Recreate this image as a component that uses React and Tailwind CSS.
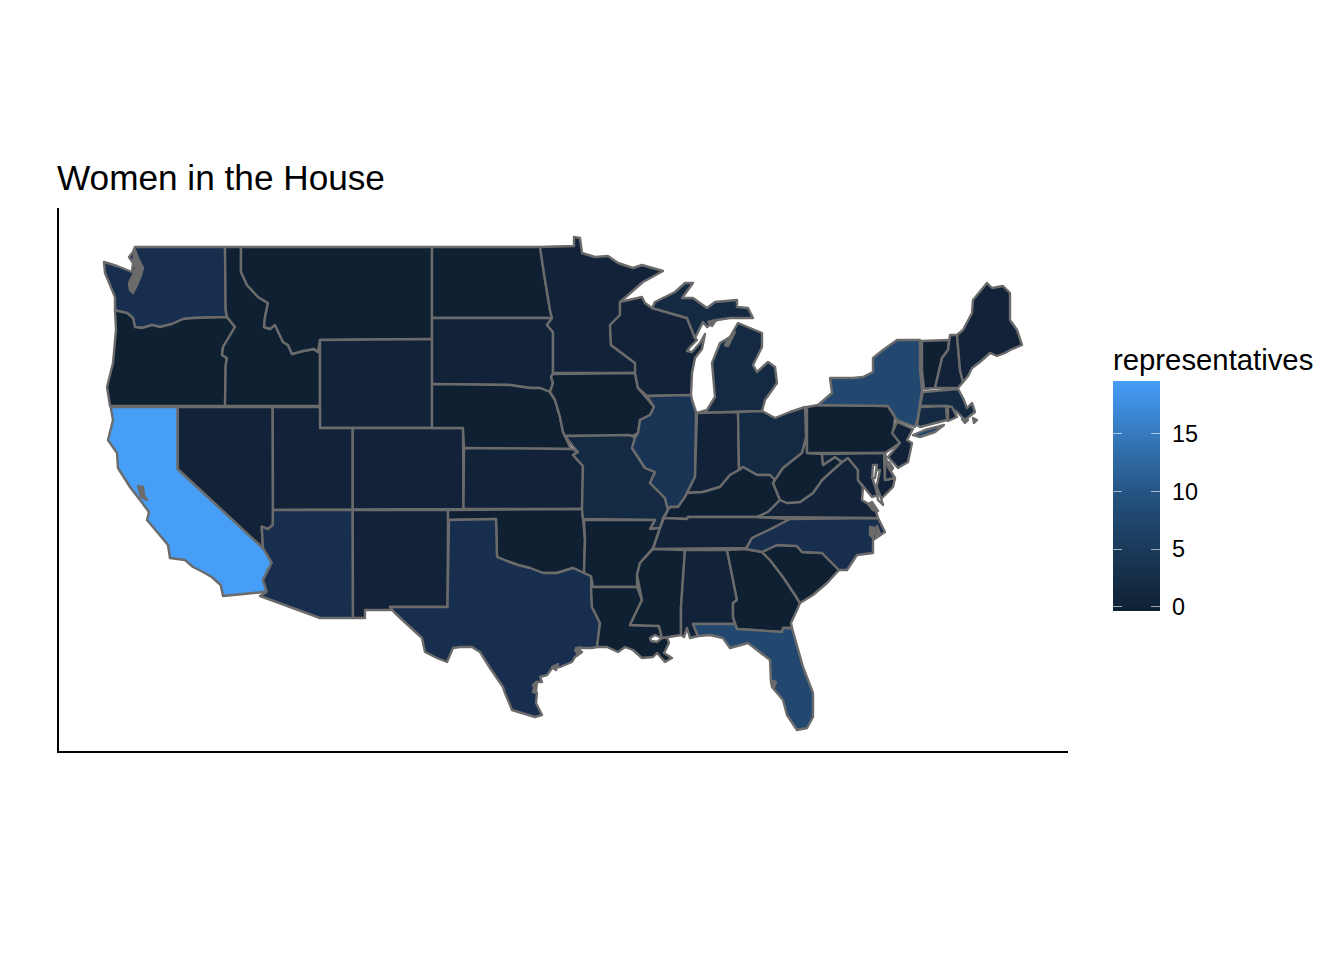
import React from "react";

const c0 = "#0f2033";
const c1 = "#122339";
const c2 = "#142a42";
const c3 = "#182e4f";
const c4 = "#1a3455";
const c5 = "#224870";
const ca = "#469ef7";

// state outlines, in page pixels
const states = [
  ["WA", c3, "135,247 225,247 225.7,310 227,317 193,318 183,319 172,324 160,327 152,325 142,328 135,327 133,318 127,313 118,311 115,310 115,297 110,285 105,273 104,262 117,266 132,272 133,263 129,257 133,252"],
  ["OR", c0, "118,311 127,313 133,318 135,327 142,328 152,325 160,327 172,324 183,319 193,318 227,317 235,327 223,347 222,355 227,358 225.7,365 225,406 110,406 107,387 113,363 116,330 115,310"],
  ["ID", c0, "225,247 241,247 241,272 247,285 258,297 268,303 265,317 264,327 270,329 275,325 283,342 288,345 292,354 303,351 314,349 318,352 320,340 320,406 225,406 225.7,365 227,358 222,355 223,347 235,327 227,317 225.7,310"],
  ["MT", c0, "241,247 432,247 432,339 320,340 318,352 314,349 303,351 292,354 288,345 283,342 275,325 270,329 264,327 265,317 268,303 258,297 247,285 241,272"],
  ["WY", c1, "320,340 432,339 432,428 320,428"],
  ["CA", ca, "110.7,407 177.7,407 177.7,469 263,548 271.7,562.7 263,580 266.7,591.7 223,596 220.7,585 211.7,577 203,572 193,567 185,560 170,558 168,545 158,533 147,520 149,512 140,500 130,487 118,468 117,453 108,440 113,420"],
  ["NV", c1, "177.7,407 272.7,407 273,525 268,529 261.7,526.7 263,548 177.7,469"],
  ["UT", c1, "272.7,407 320,407 320,428 352.7,428 352.7,509.5 273,510"],
  ["CO", c1, "352.7,428 463,428 463.5,509 352.7,509.5"],
  ["AZ", c3, "273,510 352.7,510 353,618 320,618 260,596 266.7,591.7 263,580 271.7,562.7 263,548 261.7,526.7 268,529 272.7,525"],
  ["NM", c1, "352.7,510 448,510 448,520 447.5,606.7 390,607 392,610 365,610 365,618 353,618"],
  ["ND", c0, "432,247 540,247 545,280 550,310 552,318 432,318"],
  ["SD", c1, "432,318 552,318 547,325 553,332 553,373 551,377 553,383 550,392 540,388 530,388 510,385 432,384"],
  ["NE", c0, "432,384 510,385 530,388 540,388 550,392 555,400 560,417 563,432 570,447 572,449 464,448 463,428 432,428"],
  ["KS", c1, "464,448 572,449 578,452 573,455 583,466 582,509 463.5,509"],
  ["OK", c0, "448,510 582,509 585,540 584,573 573,568 557,573 543,573 530,568 518,565 507,561 497,557 496,519 448,520"],
  ["TX", c3, "449,520 496,519 497,557 507,561 518,565 530,568 543,573 557,573 573,568 584,573 591,576 592,607 600,623 597,647 592,648 583,648 576,648 582,652 575,657 572,662 560,667 553,667 547,675 540,677 542,682 536,682 533,692 537,693 536,703 542,715 535,717 512,710 505,693 503,687 490,668 480,652 472,647 460,647 453,648 447,662 437,658 425,652 422,638 410,627 395,613 390,607 447.5,607"],
  ["MN", c1, "540,247 574,246 574,237 580,238 582,253 595,257 608,256 618,263 633,268 642,265 663,271 643,282 620,302 620,315 610,325 611,345 635,363 637,373 553,373 553,332 547,325 552,318 550,310 545,280"],
  ["IA", c0, "553,374 635,373 638,388 654,407 650,415 640,420 638,433 632,436 565,436 563,432 560,417 555,400 550,392 553,383 551,377"],
  ["MO", c2, "565,436 630,435 635,438 632,448 645,468 655,472 650,483 665,498 668,510 663,518 660,528 650,529 655,520 583,519 582,509 583,466 573,455 578,452 572,445"],
  ["AR", c0, "584,520 655,520 650,529 660,528 653,548 640,563 637,575 637,587 593,587 591,576 584,573 585,540"],
  ["LA", c0, "591,587 637,587 642,600 630,625 659,626 662,638 667,637 669,643 664,653 672,658 665,662 657,653 653,657 642,658 633,650 625,647 618,652 607,647 597,647 600,623 592,607"],
  ["WI", c1, "620,302 642,297 645,303 652,308 687,318 695,338 697,340 690,347 687,351 692,352 700,343 705,334 702,349 695,358 692,373 691,395 647,396 638,388 635,373 635,363 611,345 610,325 620,315"],
  ["MIU", c2, "652,308 655,302 663,298 675,292 685,283 693,283 682,298 693,298 707,308 715,302 737,300 737,307 748,308 753,318 738,318 730,318 717,320 707,327 703,322 695,338 687,318"],
  ["MIL", c2, "738,323 762,333 762,347 753,365 757,372 768,362 775,367 777,383 765,400 762,411 697,413 707,410 715,397 712,363 720,343 730,337"],
  ["IL", c4, "647,396 691,395 692,400 696,412 695,477 687,493 685,497 678,507 670,507 668,510 665,498 650,483 655,472 645,468 632,448 635,438 638,433 640,420 650,415 654,407"],
  ["IN", c1, "697,413 738,412 739,470 730,475 720,487 703,492 687,493 695,477"],
  ["OH", c2, "738,412 762,411 775,418 790,412 805,407 806,437 802,453 783,468 775,480 770,475 757,475 743,467 739,470"],
  ["KY", c0, "664,518 668,510 670,507 678,507 685,497 687,493 703,492 720,487 730,475 739,470 743,467 757,475 770,475 775,480 773,483 780,500 768,512 757,517 688,517 687,519"],
  ["TN", c1, "664,518 687,519 688,517 757,517 790,519 773,528 752,538 746,548 653,549 660,528"],
  ["MS", c0, "653,549 685,550 681,607 681,635 662,638 659,626 630,625 642,600 637,575 640,563"],
  ["AL", c1, "685,550 727,550 737,600 733,603 733,617 735,624 693,624 698,636 690,638 687,628 684,637 681,635 681,607"],
  ["GA", c0, "727,550 746,549 762,552 770,560 783,577 795,595 800,603 797,610 791,623 792,628 783,628 782,632 737,629 733,617 733,603 737,600"],
  ["FL", c5, "693,624 735,624 737,629 782,632 783,628 792,628 803,667 813,693 813,717 807,728 797,730 787,715 783,700 772,687 771,682 770,660 748,643 730,648 723,638 710,635 698,636"],
  ["SC", c0, "762,552 777,545 797,546 802,552 822,553 839,570 827,583 813,595 800,603 795,595 783,577 770,560"],
  ["NC", c3, "790,519 878,518 885,532 873,540 873,553 857,555 847,570 839,570 822,553 802,552 797,546 777,545 762,552 746,549 752,538 773,528"],
  ["VA", c1, "757,517 768,512 780,500 787,503 800,502 813,493 822,480 833,470 842,462 848,458 858,470 858,480 863,487 862,500 875,508 878,518"],
  ["WV", c0, "807,437 807,453 822,454 823,465 835,457 842,462 833,470 822,480 813,493 800,502 787,503 780,500 773,483 775,480 783,468 802,453"],
  ["PA", c0, "807,407 818,405 888,406 895,417 893,433 900,443 885,453 807,453"],
  ["NY", c5, "818,405 832,393 830,378 853,378 863,377 873,372 873,358 883,350 897,340 920,340 920,370 922,390 918,417 915,427 897,420 888,406"],
  ["NYL", c5, "913,435 925,430 944,425 935,432 920,437"],
  ["NJ", c1, "897,422 913,429 907,440 912,443 908,462 898,468 888,457 900,443 892,433"],
  ["VT", c0, "922,341 949,340 948,350 942,358 935,388 924,389 922,370"],
  ["NH", c1, "950,335 957,335 960,370 963,382 958,388 935,388 942,358 948,350"],
  ["ME", c1, "957,335 963,330 972,313 973,300 987,283 992,288 1003,286 1010,293 1010,320 1017,330 1022,345 1010,350 1005,353 997,356 990,353 980,362 972,368 968,376 963,382 960,370"],
  ["MA", c2, "923,392 958,389 963,398 967,408 972,403 975,412 965,420 957,412 947,406 920,406"],
  ["CT", c2, "920,407 946,406 947,420 920,427 917,425"],
  ["RI", c1, "948,406 952,407 957,417 948,421"],
  ["MD", c1, "822,454 884,453 885,480 895,478 893,487 880,500 876,490 880,470 874,470 873,480 878,495 872,497 858,480 858,470 848,458 842,462 835,457 823,465"],
  ["DE", c1, "885,453 888,467 895,478 885,480"],
];

// bays and lakes that show through the land
const water = [
  "650,638 655,635 662,638 657,642 651,641",
  "873,465 877,465 875,478 872,478",
  "876,485 881,498 883,505 878,500",
  "889,462 893,468 891,471",
];

// sounds and small islands, thick with outline in the picture
const blobs = [
  "135,250 138,258 143,268 141,275 137,285 133,293 130,290 129,283 133,275 136,268 133,262",
  "138,486 143,487 144,495 147,500 141,497",
  "730,337 735,332 728,346 725,345",
  "962,419 968,420 965,423",
  "973,418 977,420 974,423",
  "575,650 580,647 578,655",
  "552,667 558,664 556,670",
  "533,685 537,682 536,692",
  "771,680 776,682 774,687",
  "868,504 872,502 878,511 873,510",
  "870,527 875,528 873,538 870,535",
  "877,526 880,534 876,538",
  "708,322 716,320 712,326",
];

const Legend = () => (
  <div className="ml-[45px] mt-[185px] font-['Liberation_Sans',Arial,sans-serif] text-black">
    <div className="text-[29.3px] leading-[34px] whitespace-nowrap">representatives</div>
    <div className="mt-[4px] flex">
      <div className="h-[230px] w-[47px] bg-gradient-to-b from-[#469ef7] via-[#24527f] to-[#0f2033] pt-[24px]">
        {[15, 10, 5, 0].map((t) => (
          <div key={t} className="flex h-[57.67px] items-center justify-between">
            <div className="h-px w-[9px] bg-white/60"></div>
            <div className="h-px w-[9px] bg-white/60"></div>
          </div>
        ))}
      </div>
      <div className="ml-[12px] pt-[25px] text-[23.4px]">
        {[15, 10, 5, 0].map((t) => (
          <div key={t} className="h-[57.67px] leading-[57.67px]">
            {t}
          </div>
        ))}
      </div>
    </div>
  </div>
);

const App = () => {
  return (
    <div className="flex h-[960px] w-[1344px] bg-white pl-[57px] pt-[158px]">
      <div className="w-[1011px] shrink-0">
        <h1 className="h-[50px] text-[35.2px] leading-[40px] text-black font-['Liberation_Sans',Arial,sans-serif]">
          Women in the House
        </h1>
        <div className="h-[545px] border-b-2 border-l-2 border-black">
          <svg viewBox="59 208 1009 543" className="block h-[543px] w-[1009px]">
            <g stroke="#6b6b6b" strokeWidth="2.4" strokeLinejoin="round">
              {states.map(([id, fill, points]) => (
                <polygon key={id} points={points} fill={fill} />
              ))}
              {water.map((points) => (
                <polygon key={points} points={points} fill="#ffffff" />
              ))}
              {blobs.map((points) => (
                <polygon key={points} points={points} fill="#6b6b6b" />
              ))}
            </g>
          </svg>
        </div>
      </div>
      <Legend />
    </div>
  );
};

export default App;
